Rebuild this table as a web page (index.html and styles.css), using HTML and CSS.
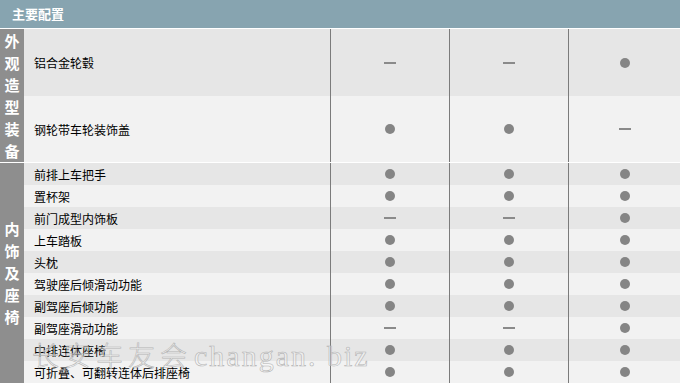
FILE: index.html
```html
<!DOCTYPE html>
<html lang="zh">
<head>
<meta charset="utf-8">
<link rel="stylesheet" href="styles.css">
</head>
<body>
<div class="page">
  <div class="header">主要配置</div>

  <div class="group g1">
    <div class="side side-6"><span>外</span><span>观</span><span>造</span><span>型</span><span>装</span><span>备</span></div>
    <div class="row dark tall1">
      <div class="label">铝合金轮毂</div>
      <div class="val"><i class="dash"></i></div>
      <div class="val"><i class="dash"></i></div>
      <div class="val"><i class="dot"></i></div>
    </div>
    <div class="row light tall2">
      <div class="label">钢轮带车轮装饰盖</div>
      <div class="val"><i class="dot"></i></div>
      <div class="val"><i class="dot"></i></div>
      <div class="val"><i class="dash"></i></div>
    </div>
  </div>

  <div class="group g2">
    <div class="side side-10"><span>内</span><span>饰</span><span>及</span><span>座</span><span>椅</span></div>
    <div class="row dark"><div class="label">前排上车把手</div><div class="val"><i class="dot"></i></div><div class="val"><i class="dot"></i></div><div class="val"><i class="dot"></i></div></div>
    <div class="row light"><div class="label">置杯架</div><div class="val"><i class="dot"></i></div><div class="val"><i class="dot"></i></div><div class="val"><i class="dot"></i></div></div>
    <div class="row dark"><div class="label">前门成型内饰板</div><div class="val"><i class="dash"></i></div><div class="val"><i class="dash"></i></div><div class="val"><i class="dot"></i></div></div>
    <div class="row light"><div class="label">上车踏板</div><div class="val"><i class="dot"></i></div><div class="val"><i class="dot"></i></div><div class="val"><i class="dot"></i></div></div>
    <div class="row dark"><div class="label">头枕</div><div class="val"><i class="dot"></i></div><div class="val"><i class="dot"></i></div><div class="val"><i class="dot"></i></div></div>
    <div class="row light"><div class="label">驾驶座后倾滑动功能</div><div class="val"><i class="dot"></i></div><div class="val"><i class="dot"></i></div><div class="val"><i class="dot"></i></div></div>
    <div class="row dark"><div class="label">副驾座后倾功能</div><div class="val"><i class="dot"></i></div><div class="val"><i class="dot"></i></div><div class="val"><i class="dot"></i></div></div>
    <div class="row light"><div class="label">副驾座滑动功能</div><div class="val"><i class="dash"></i></div><div class="val"><i class="dash"></i></div><div class="val"><i class="dot"></i></div></div>
    <div class="row dark"><div class="label">中排连体座椅</div><div class="val"><i class="dot"></i></div><div class="val"><i class="dot"></i></div><div class="val"><i class="dot"></i></div></div>
    <div class="row light"><div class="label">可折叠、可翻转连体后排座椅</div><div class="val"><i class="dot"></i></div><div class="val"><i class="dot"></i></div><div class="val"><i class="dot"></i></div></div>
  </div>

  <div class="watermark"><span class="wm-cn">长安车友会</span><span class="wm-en">changan. biz</span></div>
</div>
</body>
</html>
```

FILE: styles.css
```css
* { box-sizing: border-box; }
html, body { margin: 0; padding: 0; background: #ffffff; }
body {
  font-family: "Noto Sans CJK SC", "Noto Sans", sans-serif;
  font-size: 12px;
  color: #000;
}
.page {
  position: relative;
  width: 680px;
  height: 385px;
  overflow: hidden;
}
.header {
  height: 29px;
  background: #87a4b0;
  border-bottom: 1px solid #ffffff;
  color: #ffffff;
  font-weight: bold;
  font-size: 13px;
  line-height: 28px;
  padding-left: 12px;
}
.group {
  display: grid;
  grid-template-columns: 24px 1fr;
  border-bottom: 1px solid #ffffff;
}
.side {
  grid-column: 1;
  background: #8e8e8e;
  color: #ffffff;
  font-weight: bold;
  font-size: 15px;
  display: flex;
  flex-direction: column;
  justify-content: center;
  align-items: center;
}
.side span {
  display: block;
  height: 22px;
  line-height: 22px;
}
.g1 .side { grid-row: 1 / span 2; }
.g2 .side { grid-row: 1 / span 10; }
.row {
  grid-column: 2;
  display: grid;
  grid-template-columns: 306px 119px 119px 1fr;
  height: 22px;
}
.row.tall1 { height: 67px; }
.row.tall2 { height: 66px; }
.dark { background: #e6e6e6; }
.light { background: #f2f2f2; }
.label {
  padding-left: 10px;
  display: flex;
  align-items: center;
  white-space: nowrap;
}
.val {
  border-left: 1px solid #7b7b7b;
  display: flex;
  align-items: center;
  justify-content: center;
}
.dot {
  display: block;
  width: 10px;
  height: 10px;
  border-radius: 50%;
  background: #858585;
}
.dash {
  display: block;
  width: 12px;
  height: 2px;
  background: #8a8a8a;
}
.watermark {
  position: absolute;
  left: 32px;
  top: 335px;
  white-space: nowrap;
  pointer-events: none;
  color: rgba(255, 255, 255, 0.35);
  -webkit-text-stroke: 0.6px #b4b4b4;
  display: flex;
  align-items: baseline;
}
.wm-cn {
  font-family: "Noto Sans CJK SC", sans-serif;
  font-size: 27px;
  font-weight: 300;
  letter-spacing: 5px;
}
.wm-en {
  font-family: "Liberation Serif", serif;
  font-size: 30px;
  letter-spacing: 2px;
  margin-left: 2px;
}
```
